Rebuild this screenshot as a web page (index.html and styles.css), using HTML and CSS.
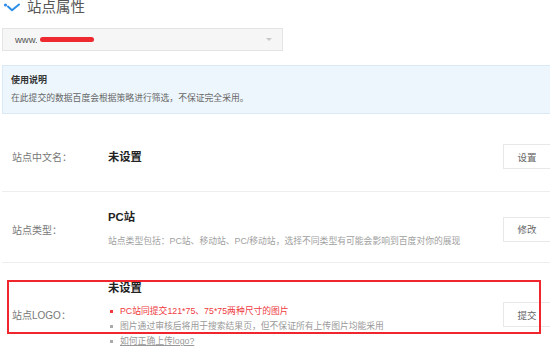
FILE: index.html
```html
<!DOCTYPE html>
<html lang="zh-CN">
<head>
<meta charset="utf-8">
<title>站点属性</title>
<link rel="stylesheet" href="styles.css">
</head>
<body>
<div class="page">
  <div class="header">
    <svg class="header-icon" width="18" height="10" viewBox="0 0 18 10">
      <circle cx="2.5" cy="3" r="1.6" fill="#2d8ee8"/>
      <polyline points="5,4.5 9,8.2 16,2.5" fill="none" stroke="#2d8ee8" stroke-width="2" stroke-linecap="round" stroke-linejoin="round"/>
    </svg>
    <h1 class="title">站点属性</h1>
  </div>

  <div class="select">
    <span class="select-text">www.</span><span class="redact"></span>
    <span class="select-arrow"></span>
  </div>

  <div class="notice">
    <div class="notice-title">使用说明</div>
    <div class="notice-text">在此提交的数据百度会根据策略进行筛选，不保证完全采用。</div>
  </div>

  <div class="row row-name">
    <div class="label">站点中文名：</div>
    <div class="content">
      <div class="value">未设置</div>
    </div>
    <button class="btn">设置</button>
  </div>

  <div class="row row-type">
    <div class="label">站点类型：</div>
    <div class="content">
      <div class="value">PC站</div>
      <div class="desc">站点类型包括：PC站、移动站、PC/移动站，选择不同类型有可能会影响到百度对你的展现</div>
    </div>
    <button class="btn">修改</button>
  </div>

  <div class="row row-logo">
    <div class="label">站点LOGO：</div>
    <div class="content">
      <div class="value">未设置</div>
      <ul class="tips">
        <li class="tip tip-red">PC站同提交121*75、75*75两种尺寸的图片</li>
        <li class="tip">图片通过审核后将用于搜索结果页，但不保证所有上传图片均能采用</li>
        <li class="tip"><a class="tip-link" href="#">如何正确上传logo?</a></li>
      </ul>
    </div>
    <button class="btn">提交</button>
    <div class="highlight"></div>
  </div>
</div>
</body>
</html>
```

FILE: styles.css
```css
html, body {
  margin: 0;
  padding: 0;
  background: #fff;
  overflow: hidden;
}

body {
  font-family: "Liberation Sans", "Noto Sans CJK SC", sans-serif;
  color: #555;
}

.page {
  margin-left: 2px;
  width: 549px;
}

.header {
  display: flex;
  align-items: center;
  height: 16px;
  margin-top: -1px;
}

.header-icon {
  margin-left: 1px;
  margin-right: 6px;
}

.title {
  margin: 0;
  font-size: 14.5px;
  line-height: 16px;
  font-weight: normal;
  color: #555;
}

.select {
  display: flex;
  align-items: center;
  box-sizing: border-box;
  width: 281px;
  height: 23px;
  margin-top: 13px;
  padding-left: 12px;
  background: #f6f6f6;
  border: 1px solid #e4e4e4;
}

.select-text {
  font-size: 9.5px;
  color: #555;
}

.redact {
  display: inline-block;
  width: 54px;
  height: 5px;
  margin-left: 2px;
  border-radius: 3px;
  background: #ee2a30;
}

.select-arrow {
  margin-left: auto;
  margin-right: 10px;
  width: 0;
  height: 0;
  border-left: 3px solid transparent;
  border-right: 3px solid transparent;
  border-top: 3px solid #c8c8c8;
}

.notice {
  box-sizing: border-box;
  height: 49px;
  margin-top: 14px;
  padding: 7px 8px 0;
  background: #edf6fd;
  border: 1px solid #dae9f6;
}

.notice-title {
  font-size: 9px;
  line-height: 14px;
  font-weight: bold;
  color: #333;
}

.notice-text {
  margin-top: 4px;
  font-size: 8.8px;
  line-height: 14px;
  color: #666;
}

.row {
  display: flex;
  align-items: center;
  padding-left: 10px;
  border-bottom: 1px solid #eeeeee;
}

.row-name {
  padding-top: 30px;
  padding-bottom: 22px;
}

.row-type {
  padding-top: 17px;
  padding-bottom: 13px;
}

.row-logo {
  position: relative;
  padding-top: 17px;
  border-bottom: none;
}

.label {
  width: 96px;
  flex: none;
  font-size: 10px;
  color: #777;
}

.content {
  flex: 1;
}

.value {
  font-size: 11.3px;
  line-height: 16px;
  font-weight: bold;
  color: #222;
}

.desc {
  margin-top: 8px;
  font-size: 8.8px;
  line-height: 16px;
  color: #a0a0a0;
}

.btn {
  flex: none;
  box-sizing: border-box;
  width: 48px;
  height: 25px;
  padding: 0;
  background: #fff;
  border: 1px solid #e8e8e8;
  font-family: "Liberation Sans", "Noto Sans CJK SC", sans-serif;
  font-size: 9.5px;
  color: #666;
}

.tips {
  list-style: none;
  margin: 8px 0 0;
  padding: 0;
}

.tip {
  position: relative;
  padding-left: 12px;
  font-size: 8.8px;
  line-height: 15px;
  color: #999;
}

.tip::before {
  content: "";
  position: absolute;
  left: 2px;
  top: 6px;
  width: 3px;
  height: 3px;
  background: #aaa;
}

.tip-red {
  color: #ee3b40;
}

.tip-red::before {
  background: #ee3b40;
}

.tip-link {
  color: #999;
  text-decoration: underline;
}

.highlight {
  position: absolute;
  left: 5px;
  top: 17px;
  width: 534px;
  height: 54px;
  box-sizing: border-box;
  border: 2px solid #f0262f;
  pointer-events: none;
}
```
